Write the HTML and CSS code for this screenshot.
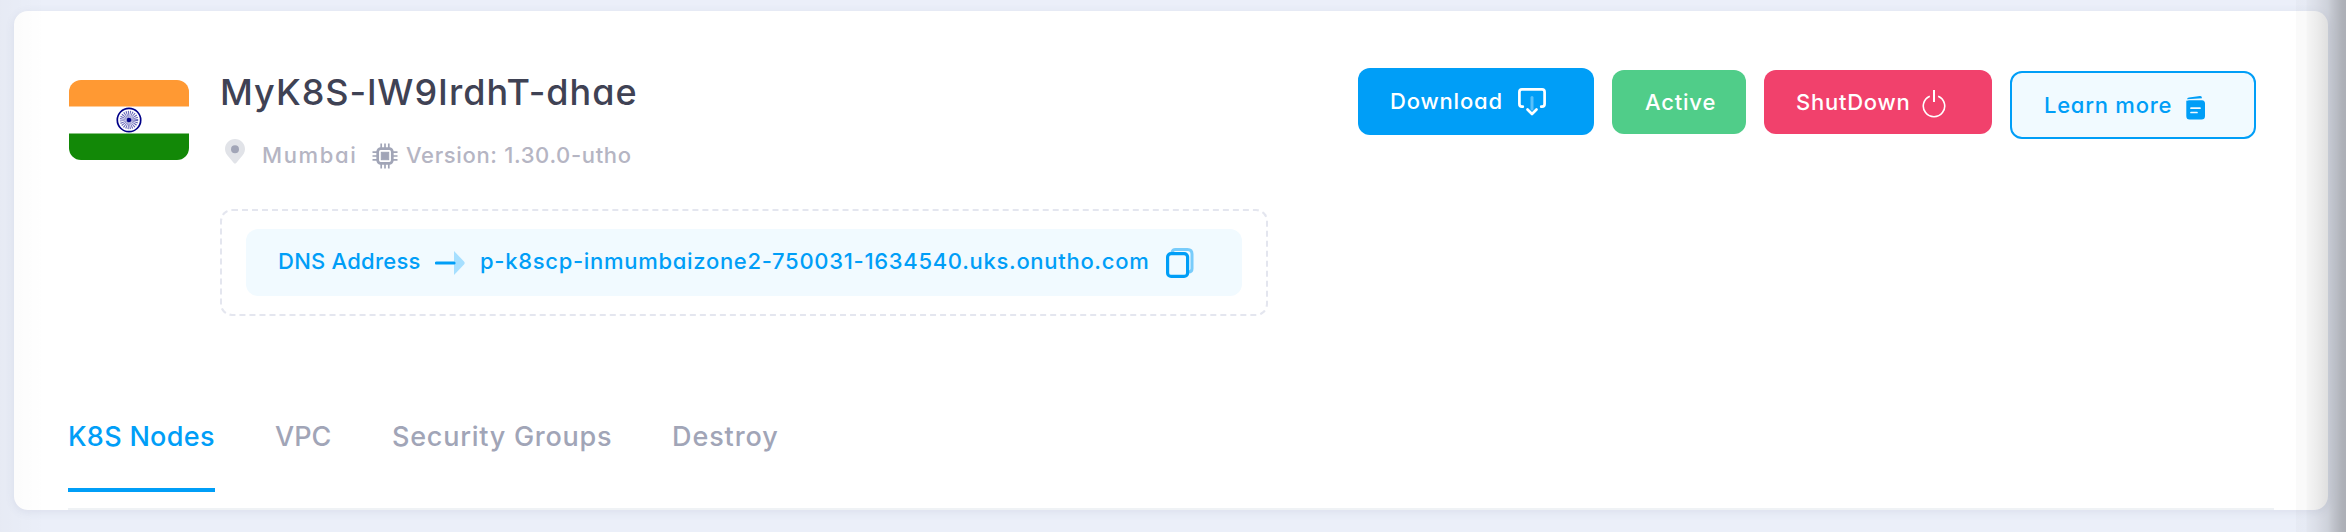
FILE: index.html
```html
<!DOCTYPE html>
<html lang="en">
<head>
<meta charset="utf-8">
<title>MyK8S-lW9IrdhT-dhae</title>
<link rel="stylesheet" href="styles.css">
</head>
<body>
<main class="card">
  <header class="header">
    <svg class="flag" viewBox="0 0 120 80">
      <rect width="120" height="80" fill="#fff"/>
      <rect width="120" height="26.5" fill="#ff9933"/>
      <rect y="53.5" width="120" height="26.5" fill="#128807"/>
      <circle cx="60" cy="40" r="11.7" fill="#fff" stroke="#000088" stroke-width="1.700"/>
      <circle cx="60" cy="40" r="4.700" fill="none" stroke="#000088" stroke-opacity=".6" stroke-width="9" stroke-dasharray=".65 .580"/>
      <circle cx="60" cy="40" r="2.3" fill="#000088"/>
    </svg>
    <section class="info">
      <h1 class="title"><span class="t-title">MyK8S-lW9IrdhT-dhae</span></h1>
      <div class="meta">
        <svg class="pin" viewBox="0 0 20 25"><path d="M10 0C4.300 0 0 4.500 0 10c0 3.300 1.700 5.900 3.800 8.100l5 5.900c.7.800 1.700.8 2.400 0l5-5.900C18.300 15.900 20 13.300 20 10 20 4.500 15.700 0 10 0z" fill="#e1e3e8"/><circle cx="10" cy="10.300" r="4" fill="#a1a5b7"/></svg>
        <span class="place t-place">Mumbai</span>
        <svg class="chip" viewBox="0 0 26 26" fill="none" stroke="#a1a5b7"><path d="M9.200.5v25M13 .5v25M16.800.5v25M.5 9.200h25M.5 13h25M.5 16.800h25" stroke-width="1.700"/><rect x="5.700" y="5.700" width="14.600" height="14.600" rx="3" fill="#fff" stroke-width="2.700"/><rect x="9.300" y="9.300" width="7.400" height="7.400" fill="#a1a5b7" stroke-width="1"/></svg>
        <span class="version t-version">Version: 1.30.0-utho</span>
      </div>
      <div class="dns">
        <div class="dns-bar">
          <span class="dns-label t-dns">DNS Address</span>
          <svg class="arrow" viewBox="0 0 30 24"><path d="M19 0l10 10.500q1.400 1.500 0 3L19 24z" fill="#a6dfff"/><path d="M1.500 12H19" stroke="#009ef7" stroke-width="3.200" stroke-linecap="round"/></svg>
          <span class="dns-name t-name">p-k8scp-inmumbaizone2-750031-1634540.uks.onutho.com</span>
          <svg class="copy" viewBox="0 0 28 30" fill="none" stroke="#009ef7"><path d="M6 4.500Q6.500 1.500 9.500 1.500H21.500Q26 1.500 26 6V20.500Q26 24 22.500 24" stroke-opacity=".5" stroke-width="3"/><rect x="1.600" y="5.600" width="20" height="22.800" rx="3.500" stroke-width="3.200"/></svg>
        </div>
      </div>
    </section>
    <div class="actions">
      <button class="btn download"><span class="t-download">Download</span>
        <svg class="i-download" viewBox="0 0 28 28" fill="none" stroke="#fff" stroke-width="2.700" stroke-linecap="round" stroke-linejoin="round"><path d="M4.800 18.700H4Q1.400 18.700 1.400 16V4Q1.400 1.400 4 1.400H24Q26.600 1.400 26.600 4V16Q26.600 18.700 24 18.700H23.200"/><path d="M14 9.500V21" stroke-opacity=".35" stroke-width="3"/><path d="M9.500 21.500l4.500 4.500 4.500-4.500"/></svg></button>
      <button class="btn active"><span class="t-active">Active</span></button>
      <button class="btn shutdown"><span class="t-shutdown">ShutDown</span>
        <svg class="i-power" viewBox="0 0 24 28" fill="none" stroke="#fff" stroke-width="1.600"><path d="M7.800 6.200A10.700 10.700 0 1 0 16.200 6.200"/><path d="M12 0V12" stroke-width="2"/></svg></button>
      <button class="btn learn"><span class="t-learn">Learn more</span>
        <svg class="i-doc" viewBox="0 0 19 24"><path d="M1 3.300Q1.300 1.700 3 1.500L14 .1Q16 0 16 2.200L1 3.300z" fill="#009ef7"/><path d="M3 4.200H16Q19 4.600 19 7.500V20Q19 23.500 15.500 23.500H3.500Q.3 23.500.3 20V4.500Q1 5 3 4.200z" fill="#009ef7"/><path d="M5 12.200h9M5 16.500h6" stroke="#f1faff" stroke-width="1.700" stroke-linecap="round"/></svg></button>
    </div>
  </header>
  <nav class="tabs">
    <a class="tab current"><span class="t-tab1">K8S Nodes</span></a>
    <a class="tab vpc"><span class="t-tab2">VPC</span></a>
    <a class="tab groups"><span class="t-tab3">Security Groups</span></a>
    <a class="tab destroy"><span class="t-tab4">Destroy</span></a>
  </nav>
</main>
<div class="edge-left"></div>
<div class="edge-right"></div>
</body>
</html>
```
FILE: styles.css
```css
* { box-sizing: border-box; }
body {
  margin: 0;
  height: 532px;
  padding: 11px 18px 0 14px;
  overflow: hidden;
  background: #ebeff9;
  font-family: Inter, "Open Sans", sans-serif;
  font-feature-settings: "cv11", "calt" 0;
  font-size: 22px;
  font-weight: 500;
  white-space: nowrap;
  position: relative;
}
svg { display: block; flex: none; }
.card {
  display: flex;
  flex-direction: column;
  height: 499px;
  padding: 57px 54px 0;
  border-radius: 14px;
  background: #fff;
  box-shadow: 0 2px 10px rgba(76, 87, 125, .1);
}
.header { display: flex; align-items: flex-start; padding: 0 18px 0 1px; }
.flag { width: 120px; height: 80px; margin-top: 12px; border-radius: 12px; }
.info { margin-left: 31px; width: 1048px; }
.title { margin: 0; font-size: 36px; font-weight: 500; line-height: 48px; color: #3f4254; }
.meta { display: flex; height: 32px; margin-top: 23px; line-height: 32px; color: #b5b5c3; }
.pin { width: 20px; height: 25px; margin-left: 5px; }
.place { width: 109px; margin-left: 17px; }
.chip { width: 26px; height: 26px; margin: 4px 0 0 1px; }
.version { margin-left: 8px; }
.dns { margin-top: 38px; padding: 18px 24px; border: 2px dashed #e4e6ef; border-radius: 12px; }
.dns-bar {
  display: flex;
  align-items: center;
  height: 67px;
  padding: 0 0 3px 32px;
  border-radius: 12px;
  background: #f1faff;
  color: #009ef7;
}
.dns-label { width: 157px; }
.arrow { width: 30px; height: 24px; margin-top: 3px; }
.dns-name { width: 686px; margin-left: 15px; }
.copy { width: 28px; height: 30px; margin: 4px 0 0; }

.actions { display: flex; margin-left: auto; }
.btn {
  display: flex;
  align-items: center;
  height: 64px;
  margin: 2px 0 0 18px;
  padding: 0;
  border: 0;
  border-radius: 12px;
  font: inherit;
  font-feature-settings: inherit;
  color: #fff;
}
.btn span { flex: none; text-align: left; }
.download { width: 236px; height: 67px; margin-top: 0; padding: 0 0 1px 32px; background: #009ef7; }
.download span { width: 128px; }
.i-download { width: 28px; height: 28px; margin-top: 1px; }
.active { width: 134px; padding-left: 33px; background: #50cd89; }
.shutdown { width: 228px; padding-left: 32px; background: #f1416c; }
.shutdown span { width: 126px; }
.i-power { width: 24px; height: 28px; margin-top: 4px; }
.learn { width: 246px; height: 68px; margin-top: 3px; padding-left: 32px; border: 2px solid #009ef7; background: #f1faff; color: #009ef7; }
.learn span { width: 142px; }
.i-doc { width: 19px; height: 24px; margin-top: 5px; }

/* tracking per label */
.t-title { letter-spacing: 1px; }
.t-place { letter-spacing: 1.65px; }
.t-version { letter-spacing: .65px; }
.t-dns { letter-spacing: .25px; }
.t-name { letter-spacing: .7px; }
.t-download { letter-spacing: .82px; }
.t-active { letter-spacing: .8px; }
.t-shutdown { letter-spacing: .75px; }
.t-learn { letter-spacing: .75px; }
.t-tab1 { letter-spacing: .3px; }
.t-tab2 { letter-spacing: 0; }
.t-tab3 { letter-spacing: .75px; }
.t-tab4 { letter-spacing: .9px; }

.tabs {
  display: flex;
  height: 94px;
  margin-top: auto;
  border-bottom: 2px solid #eff2f5;
  font-size: 27px;
  line-height: 41px;
  color: #a1a5b7;
}
.tab { height: 76px; }
.current { width: 147px; border-bottom: 4px solid #009ef7; color: #009ef7; }
.vpc { width: 58px; margin-left: 60px; }
.groups { width: 220px; margin-left: 59px; }
.destroy { margin-left: 60px; }

.edge-left, .edge-right { position: absolute; top: 0; bottom: 0; pointer-events: none; }
.edge-left { left: 0; width: 46px; background: linear-gradient(90deg, rgba(0,0,0,.018), rgba(0,0,0,0)); }
.edge-right {
  right: 0;
  width: 50px;
  background: linear-gradient(90deg, rgba(0,0,0,.02) 0 10px, rgba(0,0,0,.04) 11px, rgba(0,0,0,.07) 20px, rgba(0,0,0,.125) 32px, rgba(0,0,0,.17) 36px, rgba(0,0,0,.26) 46px, rgba(0,0,0,.27));
}
```
